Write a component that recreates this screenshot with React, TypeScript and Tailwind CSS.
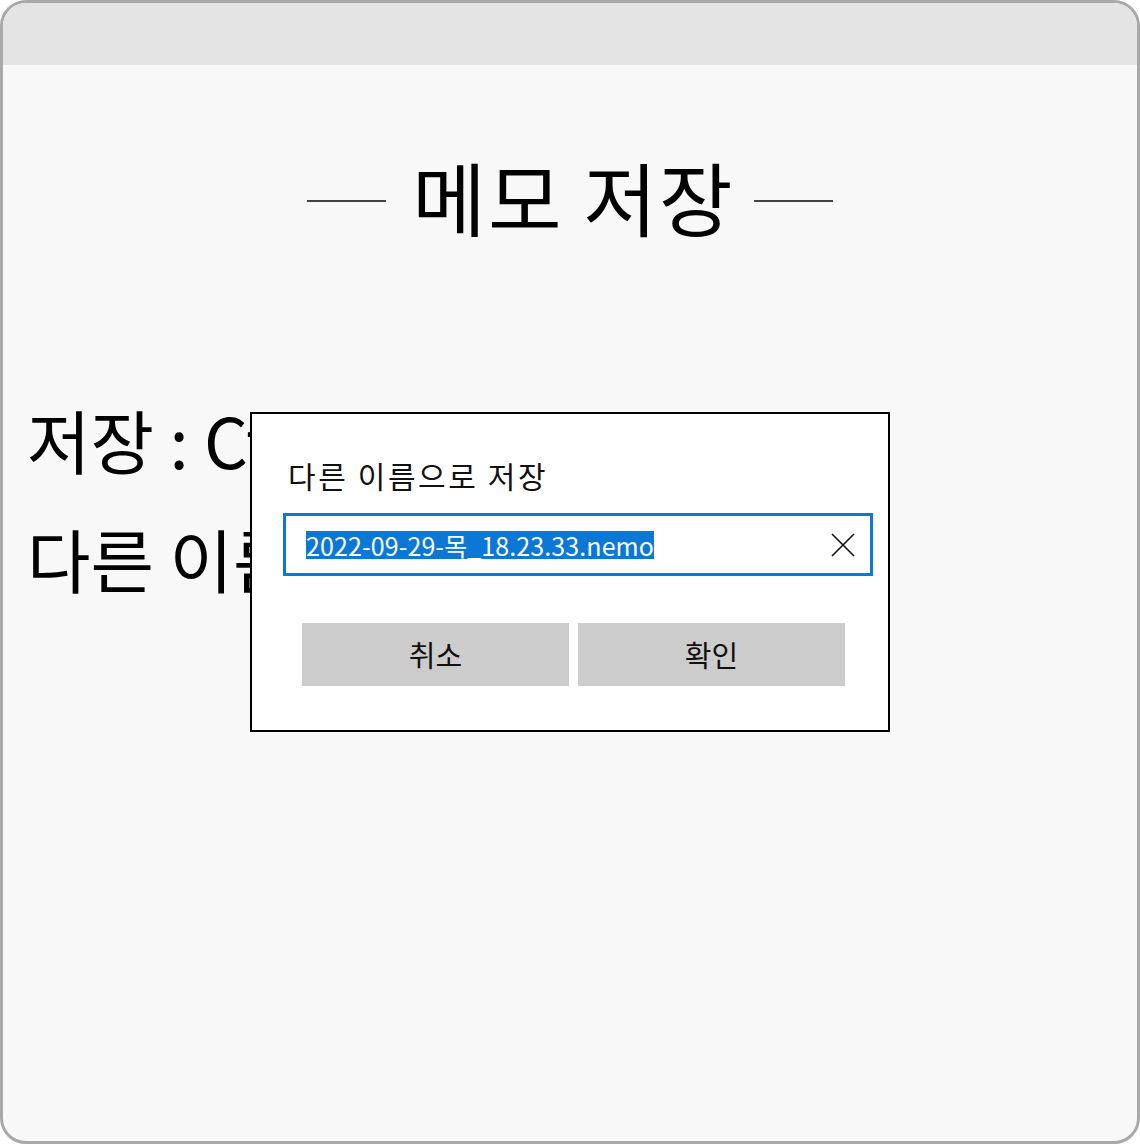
import React from 'react';

const KR = { fontFamily: '"Noto Sans CJK KR", "Noto Sans", sans-serif' };

const ClearIcon: React.FC = () => (
  <svg width="26" height="26" viewBox="0 0 26 26" fill="none">
    <path d="M2 2 L24 24 M24 2 L2 24" stroke="#111" strokeWidth="1.6" />
  </svg>
);

const SaveAsDialog: React.FC = () => {
  return (
    <div className="absolute left-[247px] top-[409px] w-[640px] h-[320px] bg-white border-2 border-black">
      <div className="ml-[36px] mt-[43px] text-[30px] leading-[36px] tracking-[2.6px] text-[#111]">
        다른 이름으로 저장
      </div>
      <div className="ml-[31px] mt-[20px] w-[590px] h-[63px] border-[3px] border-[#0a78d4] flex items-center pl-[20px] pr-[14px]">
        <span className="bg-[#0a78d4] text-white text-[25px] leading-[28px] tracking-[0.1px]">
          2022-09-29-목_18.23.33.nemo
        </span>
        <div className="ml-auto">
          <ClearIcon />
        </div>
      </div>
      <div className="ml-[50px] mt-[47px] flex gap-[9px]">
        <button className="w-[267px] h-[63px] bg-[#cccccc] text-[29px] text-[#111] flex items-center justify-center">
          취소
        </button>
        <button className="w-[267px] h-[63px] bg-[#cccccc] text-[29px] text-[#111] flex items-center justify-center">
          확인
        </button>
      </div>
    </div>
  );
};

const App: React.FC = () => {
  return (
    <div className="w-[1140px] h-[1144px] bg-white" style={KR}>
      <div className="relative w-full h-full rounded-[26px] border-[3px] border-[#a9a9a9] bg-[#f8f8f8] overflow-hidden">
        <div className="h-[62px] bg-[#e4e4e4]" />

        <div className="mt-[90px] flex items-center justify-center text-[80px] leading-none text-black">
          <div className="mt-[12px] w-[79px] h-[2px] bg-[#444]" />
          <span className="ml-[26px] mr-[19px] tracking-[2px]">메모 저장</span>
          <div className="mt-[12px] w-[79px] h-[2px] bg-[#444]" />
        </div>

        <div className="mt-[145px] pl-[24px] text-[69px] leading-[119px] text-black">
          <div>저장 : Ctrl + S</div>
          <div>다른 이름으로 저장</div>
        </div>

        <SaveAsDialog />
      </div>
    </div>
  );
};

export default App;
